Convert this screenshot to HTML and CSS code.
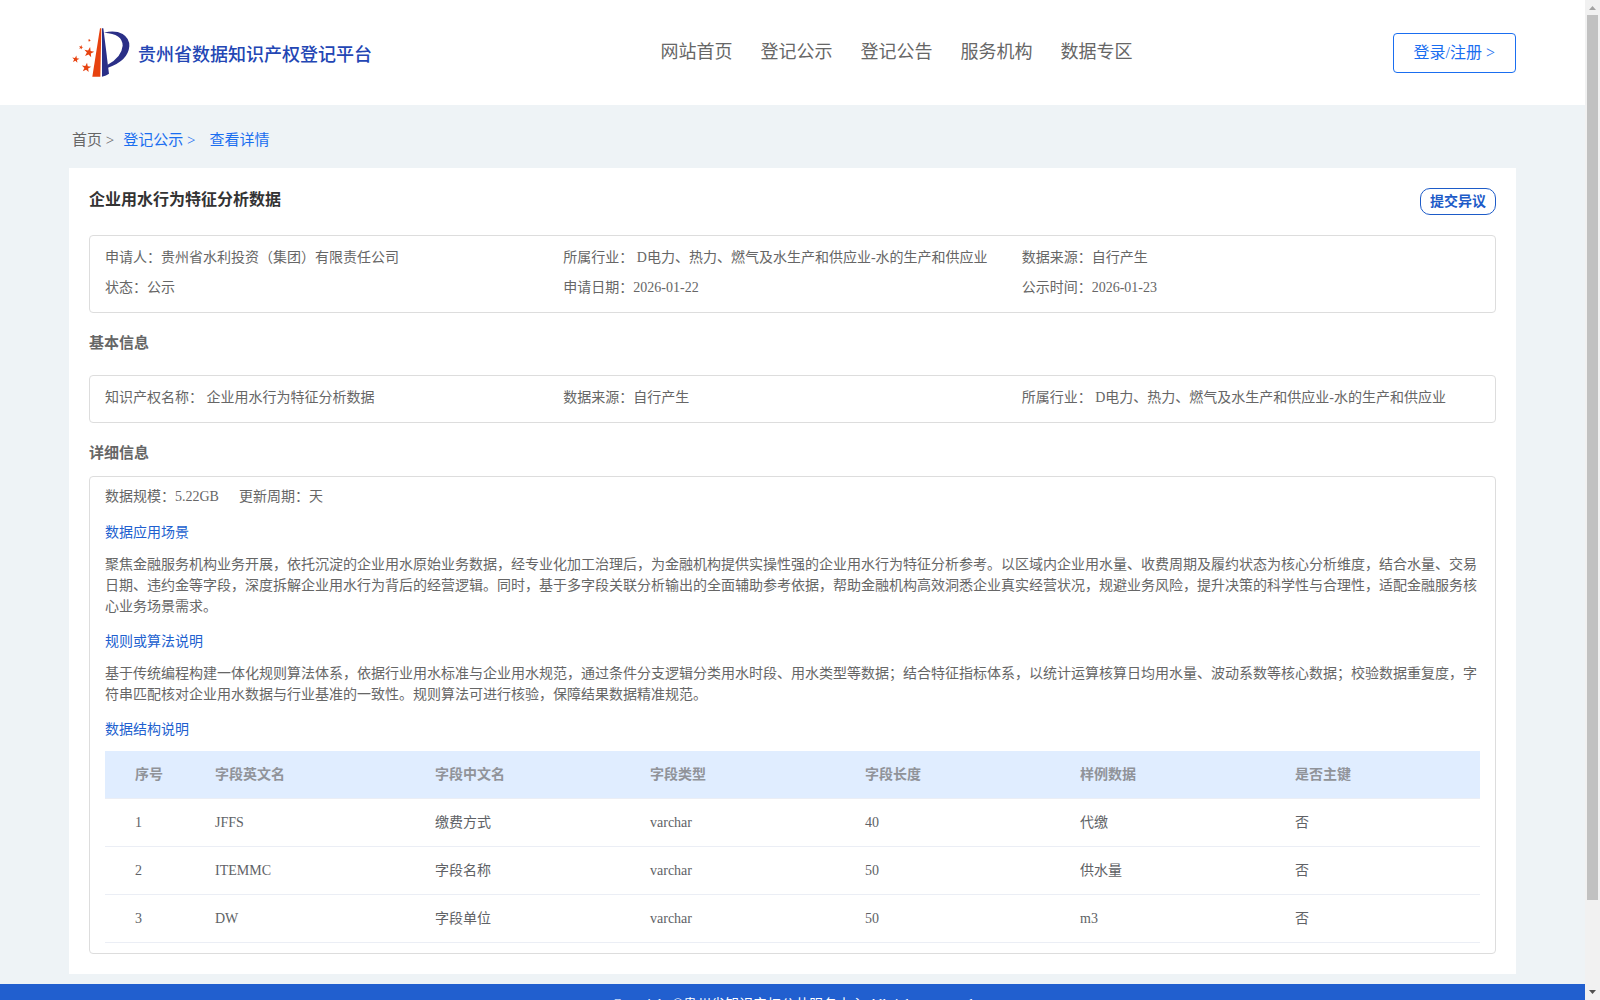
FILE: index.html
```html
<!DOCTYPE html>
<html lang="zh-CN">
<head>
<meta charset="utf-8">
<meta name="viewport" content="width=device-width, initial-scale=1">
<title>贵州省数据知识产权登记平台</title>
<link rel="stylesheet" href="styles.css">
</head>
<body>
<div class="page">
  <header class="site-header">
    <div class="brand">
      <svg class="brand-mark" viewBox="36 40 174 150" aria-hidden="true">
        <defs><path id="star" d="M0-10 2.4-3.2 9.5-3.1 3.8 1.2 5.9 8.1 0 4-5.9 8.1-3.8 1.2-9.5-3.1-2.4-3.2Z"/></defs>
        <g fill="#e7420f">
          <path d="M120 41h4l-3 145H97Z"/>
          <use href="#star" transform="translate(88 77) rotate(10) scale(.5)"/>
          <use href="#star" transform="translate(63 98) rotate(15) scale(.7)"/>
          <use href="#star" transform="translate(87 113) rotate(12) scale(1.6)"/>
          <use href="#star" transform="translate(47 134) rotate(10) scale(1.15)"/>
          <use href="#star" transform="translate(79 159) rotate(8) scale(1.5)"/>
        </g>
        <g fill="#2a2f87">
          <path d="M126 41h4l17 136q-8 6-21 9Z"/>
          <path d="M132 54Q165 46 188 58Q209 71 208 95Q204 139 144 159L143 150Q185 127 188 93Q188 57 132 54Z"/>
        </g>
      </svg>
      <span class="brand-name">贵州省数据知识产权登记平台</span>
    </div>
    <nav class="main-nav">
      <a href="#">网站首页</a>
      <a href="#">登记公示</a>
      <a href="#">登记公告</a>
      <a href="#">服务机构</a>
      <a href="#">数据专区</a>
    </nav>
    <button class="login" type="button">登录/注册 &gt;</button>
  </header>

  <nav class="breadcrumb">
    <a class="crumb-home" href="#">首页 &gt;</a>
    <a href="#">登记公示 &gt;</a>
    <a class="crumb-current" href="#">查看详情</a>
  </nav>

  <main class="card">
    <div class="card-head">
      <h1>企业用水行为特征分析数据</h1>
      <button class="objection" type="button">提交异议</button>
    </div>
    <div class="box facts">
      <span>申请人：贵州省水利投资（集团）有限责任公司</span>
      <span>所属行业： D电力、热力、燃气及水生产和供应业-水的生产和供应业</span>
      <span>数据来源：自行产生</span>
      <span>状态：公示</span>
      <span>申请日期：2026-01-22</span>
      <span>公示时间：2026-01-23</span>
    </div>

    <h2>基本信息</h2>
    <div class="box facts">
      <span>知识产权名称： 企业用水行为特征分析数据</span>
      <span>数据来源：自行产生</span>
      <span>所属行业： D电力、热力、燃气及水生产和供应业-水的生产和供应业</span>
    </div>

    <h2 class="detail-title">详细信息</h2>
    <div class="box detail">
      <div class="summary"><span>数据规模：5.22GB</span><span>更新周期：天</span></div>
      <h3>数据应用场景</h3>
      <p>聚焦金融服务机构业务开展，依托沉淀的企业用水原始业务数据，经专业化加工治理后，为金融机构提供实操性强的企业用水行为特征分析参考。以区域内企业用水量、收费周期及履约状态为核心分析维度，结合水量、交易日期、违约金等字段，深度拆解企业用水行为背后的经营逻辑。同时，基于多字段关联分析输出的全面辅助参考依据，帮助金融机构高效洞悉企业真实经营状况，规避业务风险，提升决策的科学性与合理性，适配金融服务核心业务场景需求。</p>
      <h3>规则或算法说明</h3>
      <p>基于传统编程构建一体化规则算法体系，依据行业用水标准与企业用水规范，通过条件分支逻辑分类用水时段、用水类型等数据；结合特征指标体系，以统计运算核算日均用水量、波动系数等核心数据；校验数据重复度，字符串匹配核对企业用水数据与行业基准的一致性。规则算法可进行核验，保障结果数据精准规范。</p>
      <h3>数据结构说明</h3>
      <table>
        <colgroup><col class="col-index"><col class="col-name"><col class="col"><col class="col"><col class="col"><col class="col"><col></colgroup>
        <thead>
          <tr><th>序号</th><th>字段英文名</th><th>字段中文名</th><th>字段类型</th><th>字段长度</th><th>样例数据</th><th>是否主键</th></tr>
        </thead>
        <tbody>
          <tr><td>1</td><td>JFFS</td><td>缴费方式</td><td>varchar</td><td>40</td><td>代缴</td><td>否</td></tr>
          <tr><td>2</td><td>ITEMMC</td><td>字段名称</td><td>varchar</td><td>50</td><td>供水量</td><td>否</td></tr>
          <tr><td>3</td><td>DW</td><td>字段单位</td><td>varchar</td><td>50</td><td>m3</td><td>否</td></tr>
        </tbody>
      </table>
    </div>
  </main>

  <footer class="site-footer">Copyright ©贵州省知识产权公共服务中心 All rights reserved</footer>
</div>
<div class="scrollbar" aria-hidden="true">
  <svg class="arrow" viewBox="0 0 15 15"><path d="M4 10h7L7.500 6Z" fill="#a3a3a3"/></svg>
  <div class="thumb"></div>
  <svg class="arrow" viewBox="0 0 15 15"><path d="M4 5h7L7.500 9Z" fill="#505050"/></svg>
</div>
</body>
</html>
```
FILE: styles.css
```css
* { box-sizing: border-box; }

body {
  margin: 0;
  height: 100vh;
  overflow: hidden;
  display: flex;
  font-family: "Liberation Serif", "Noto Sans CJK SC", serif;
  font-size: 14px;
  color: #666;
  background: #eef3f6;
}

a { color: inherit; text-decoration: none; }
button { font-family: inherit; background: #fff; cursor: pointer; white-space: nowrap; }
h1, h2, h3, p { margin: 0; }

.page { flex: 1; min-width: 0; }

.site-header {
  display: flex;
  align-items: center;
  justify-content: space-between;
  height: 105px;
  padding: 0 69px;
  background: #fff;
}
.brand { display: flex; align-items: center; flex: 1; gap: 8px; padding-left: 3px; }
.brand-mark { width: 58px; height: 50px; }
.brand-name { font-size: 18px; font-weight: 500; color: #2346b4; white-space: nowrap; }
.main-nav { display: flex; gap: 28px; padding-bottom: 6px; font-size: 18px; white-space: nowrap; }
.login {
  margin-left: 260px;
  height: 40px;
  padding: 0 20px;
  border: 1px solid #1a6ef0;
  border-radius: 4px;
  font-size: 16px;
  line-height: 22px;
  color: #1a6ef0;
}

.breadcrumb {
  display: flex;
  gap: 9px;
  padding: 24px 72px 17px;
  font-size: 15px;
  line-height: 22px;
  color: #1a6ef0;
}
.crumb-home { color: #666; }
.crumb-current { padding-left: 5px; }

.card { margin: 0 69px 10px; padding: 20px; background: #fff; }
.card-head { display: flex; justify-content: space-between; align-items: flex-start; margin-bottom: 20px; }
h1 { font-size: 16px; line-height: 24px; color: #333; }
.objection {
  height: 27px;
  padding: 0 9px;
  border: 1px solid #1d5bc8;
  border-radius: 10px;
  font-size: 14px;
  font-weight: bold;
  line-height: 22px;
  color: #1d5bc8;
}

.box { border: 1px solid #ddd; border-radius: 4px; }
.facts {
  display: grid;
  grid-template-columns: repeat(3, 1fr);
  padding: 7px 15px 9px;
  line-height: 30px;
}
h2 { margin: 20px 0 22px; font-size: 15px; line-height: 20px; }
.detail-title { margin-bottom: 13px; }

.detail { padding: 5px 15px 10px; }
.summary { display: flex; gap: 20px; margin-bottom: 10px; line-height: 30px; }
h3 { margin-bottom: 10px; font-size: 14px; font-weight: normal; line-height: 22px; color: #215fcf; }
p { margin-bottom: 14px; line-height: 21px; }

table { width: 100%; table-layout: fixed; border-collapse: separate; border-spacing: 0; text-align: left; }
.col-index { width: 100px; }
.col-name { width: 16%; }
.col { width: 215px; }
th, td { height: 48px; padding: 0 10px; border-bottom: 1px solid #ebeef5; line-height: 22px; }
th { background: #e0edff; color: #909399; }
td { color: #606266; }
th:first-child, td:first-child { padding-left: 30px; }

.site-footer {
  padding: 10px 0;
  line-height: 22px;
  text-align: center;
  color: #fff;
  background: #215fcf;
}

.scrollbar { display: flex; flex-direction: column; width: 15px; background: #f1f1f1; }
.arrow { width: 15px; height: 15px; }
.thumb { height: 88.5vh; margin: 0 2px auto; background: #c1c1c1; }
```
